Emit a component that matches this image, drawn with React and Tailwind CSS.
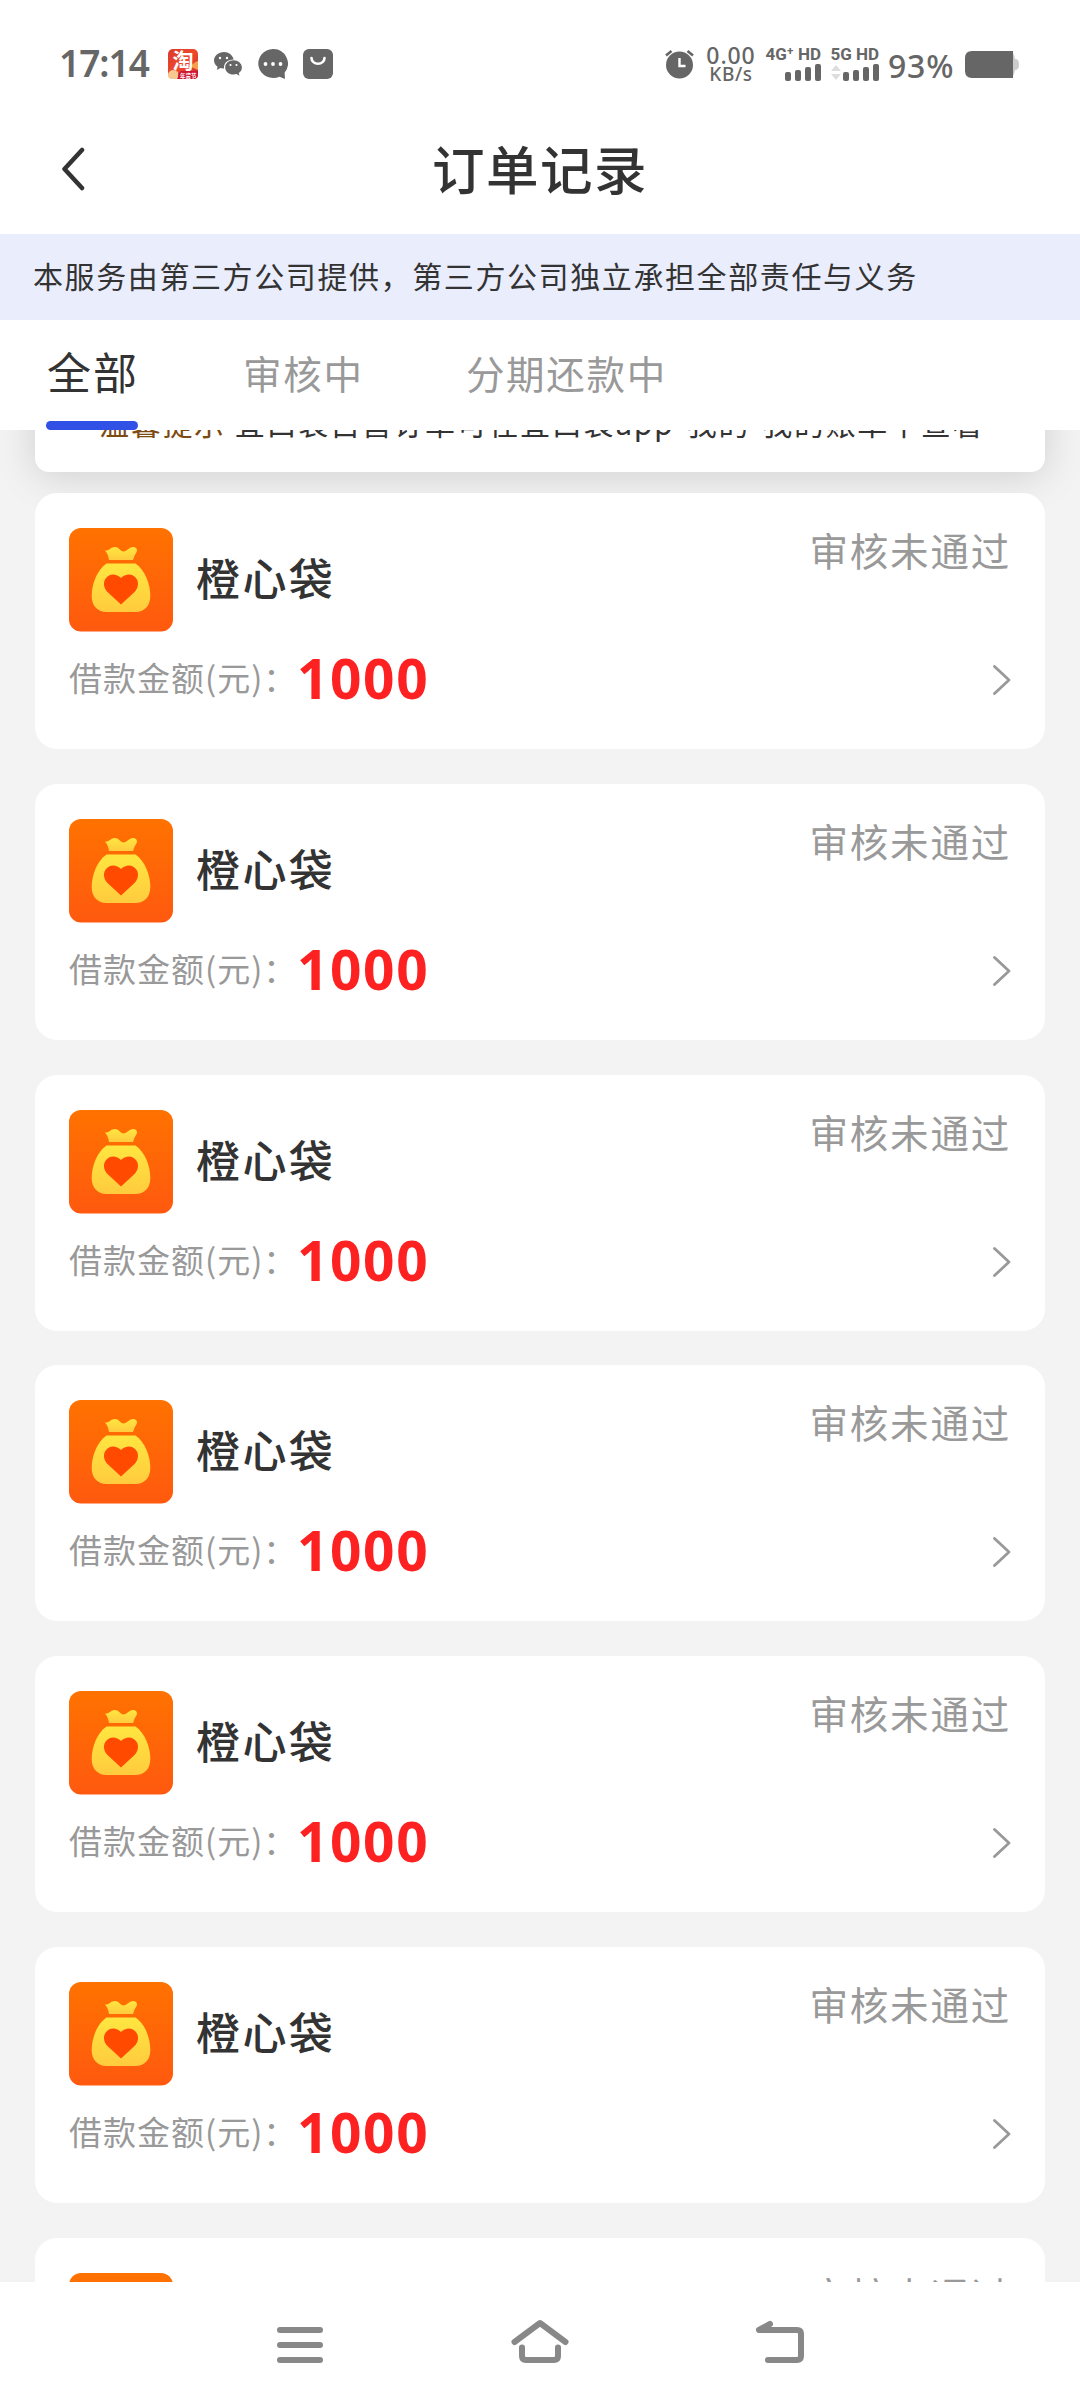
const orders = Array.from({ length: 7 }, (_, id) => ({
  id,
  name: "橙心袋",
  status: "审核未通过",
  amount: "1000",
}));

function TaobaoBadge() {
  return (
    <svg width="30" height="30" viewBox="0 0 30 30" className="shrink-0">
      <defs>
        <linearGradient id="tb" x1="0" y1="0" x2="1" y2="1">
          <stop offset="0" stopColor="#d93a2c" />
          <stop offset="0.5" stopColor="#ee4a2c" />
          <stop offset="1" stopColor="#cf2434" />
        </linearGradient>
      </defs>
      <rect width="30" height="30" rx="5" fill="url(#tb)" />
      <path d="M0 25c2-5 6-5 10-2v7H4a4 4 0 0 1-4-4z" fill="#f7c890" />
      <path d="M30 12c-4 1-5 4-9 5l9 4z" fill="#f6a04c" />
      <path d="M13 22h17v4a4 4 0 0 1-4 4H9c2-2 1-7 4-8z" fill="#cc1836" />
      <text x="4.500" y="18.500" fontSize="21" fontWeight="700" fill="#fff" fontFamily="Noto Sans CJK SC, sans-serif">淘</text>
      <text x="12" y="28.500" fontSize="5.500" fontWeight="700" fill="#fff" fontFamily="Noto Sans CJK SC, sans-serif">年货节</text>
    </svg>
  );
}

function WechatGlyph() {
  return (
    <svg width="28" height="24" viewBox="0 0 28 24" className="ml-4 shrink-0">
      <path d="M10 0C4.500 0 0 3.800 0 8.500c0 2.600 1.400 4.800 3.600 6.300L2.800 18l3.700-1.900c1.100.3 2.300.5 3.500.4C9.400 11 13.500 7.600 19.600 7.400 18.700 3.100 14.600 0 10 0z" fill="#666" />
      <path d="M19.500 8.300c-4.700 0-8.300 3.200-8.300 7.100s3.600 7.100 8.300 7.100c1 0 2-.2 2.900-.4l3.100 1.700-.8-2.800c1.900-1.300 3.200-3.300 3.200-5.600 0-3.900-3.800-7.100-8.400-7.100z" fill="#666" />
      <g fill="#fff">
        <circle cx="6" cy="6" r="1.200" />
        <circle cx="13" cy="6" r="1.200" />
        <circle cx="16.500" cy="13" r="1.100" />
        <circle cx="22.500" cy="13" r="1.100" />
      </g>
    </svg>
  );
}

function ChatGlyph() {
  return (
    <svg width="30" height="30" viewBox="0 0 30 30" className="ml-4 shrink-0">
      <path d="M15 0a15 14.500 0 1 0 6.500 27.700L27 30l-.4-6.200A14.600 14.600 0 0 0 15 0z" fill="#666" />
      <g fill="#fff">
        <circle cx="7.500" cy="15" r="1.900" />
        <circle cx="15" cy="15" r="1.900" />
        <circle cx="22.500" cy="15" r="1.900" />
      </g>
    </svg>
  );
}

function BagGlyph() {
  return (
    <svg width="30" height="30" viewBox="0 0 30 30" className="ml-[15px] shrink-0">
      <rect width="30" height="30" rx="6" fill="#666" />
      <path d="M8.500 9a6.500 5.800 0 0 0 13 0" fill="none" stroke="#fff" strokeWidth="2.600" strokeLinecap="round" />
    </svg>
  );
}

function AlarmGlyph() {
  return (
    <svg width="29" height="29" viewBox="0 0 29 29" className="shrink-0">
      <circle cx="14.500" cy="15" r="13.500" fill="#666" />
      <path d="M1 5.500 6.500 1M28 5.500 22.500 1" stroke="#666" strokeWidth="2.600" />
      <path d="M14.500 8v8h6" fill="none" stroke="#fff" strokeWidth="2.400" />
    </svg>
  );
}

function Bars() {
  return (
    <div className="flex items-end gap-[4px]">
      <i className="block h-[9px] w-[6px] rounded-[2px] bg-[#666]" />
      <i className="block h-[11px] w-[6px] rounded-[2px] bg-[#666]" />
      <i className="block h-[14px] w-[6px] rounded-[2px] bg-[#666]" />
      <i className="block h-[17px] w-[6px] rounded-[2px] bg-[#666]" />
    </div>
  );
}

function StatusBar() {
  return (
    <div className="flex h-[100px] shrink-0 justify-between pl-[59px] pr-[61px] pt-[28px] text-[#666]">
      <div className="flex h-[72px] items-center">
        <span className="-mt-[3px] w-[109px] font-['Noto_Sans'] text-[37px] font-semibold leading-none tracking-[-1px]">17:14</span>
        <TaobaoBadge />
        <WechatGlyph />
        <ChatGlyph />
        <BagGlyph />
      </div>
      <div className="flex h-[72px] items-center">
        <AlarmGlyph />
        <div className="ml-[11px] flex w-[52px] flex-col items-center font-['Noto_Sans'] font-medium">
          <span className="text-[23px] leading-[19px] tracking-[0.900px]">0.00</span>
          <span className="text-[19px] leading-[18px] tracking-[0.600px]">KB/s</span>
        </div>
        <div className="ml-[7px] flex h-[34px] w-[58px] flex-col items-end justify-between pr-px">
          <span className="whitespace-nowrap font-['Roboto'] text-[17px] font-bold leading-[14px]">4G⁺ HD</span>
          <Bars />
        </div>
        <div className="ml-[7px] flex h-[34px] w-[50px] flex-col items-end justify-between">
          <span className="whitespace-nowrap font-['Roboto'] text-[17px] font-bold leading-[14px]">5G HD</span>
          <div className="flex items-end gap-[2px]">
            <svg width="10" height="16" viewBox="0 0 10 16">
              <path d="M5 0l5 6H0zM5 15l5-6H0z" fill="#ddd" />
            </svg>
            <Bars />
          </div>
        </div>
        <span className="ml-[9px] mt-[3px] w-[68px] whitespace-nowrap font-['Noto_Sans'] text-[32px] font-medium leading-none tracking-[0.800px]">93%</span>
        <svg width="54" height="27" viewBox="0 0 54 27" className="ml-[9px]">
          <path d="M44 0q5 0 6 8 4 0 4 5.500T50 19q-1 8-6 8z" fill="#ccc" />
          <path d="M7 0h41v27H7q-7 0-7-7V7q0-7 7-7z" fill="#666" />
        </svg>
      </div>
    </div>
  );
}

function Pouch() {
  return (
    <svg width="104" height="104" viewBox="0 0 104 104" className="shrink-0">
      <defs>
        <linearGradient id="bg" x1="0" y1="0" x2="0" y2="1">
          <stop offset="0" stopColor="#ff7200" />
          <stop offset="1" stopColor="#ff590f" />
        </linearGradient>
        <linearGradient id="bag" x1="0" y1="0" x2="0" y2="1">
          <stop offset="0" stopColor="#ffe640" />
          <stop offset="1" stopColor="#ffcb3e" />
        </linearGradient>
      </defs>
      <rect width="104" height="103.500" rx="12" fill="url(#bg)" />
      <path d="M36 22.500c4 .5 6-3.500 10-3.500 4.500 0 5 4.500 8.500 4.500S60 19 64 19c4.500 0 5 4 2.500 7-1.500 2-1.500 4-2.500 6H40c-.5-3.500-1.500-6.500-4-9.500z" fill="url(#bag)" />
      <path d="M37.500 35.500h29C76 42 81.300 56 81.300 68c0 10-6 16-15 16H37.700c-9 0-15-6-15-16 0-12 5.300-26 14.800-32.500z" fill="url(#bag)" />
      <path d="M52 76.500 38.500 64c-4.500-4.500-4.500-11-1-14.500 4-4.500 10.500-3.500 14.500.5 4-4 10.500-5 14.500-.5 3.500 3.500 3.500 10-1 14.500z" fill="#ff4a00" />
    </svg>
  );
}

function OrderCard({ order }) {
  return (
    <div className="h-[256px] shrink-0 rounded-[22px] bg-white pl-[34px] pr-[34px] pt-[35px]">
      <div className="flex h-[104px]">
        <Pouch />
        <span className="ml-[23px] mt-[17px] text-[44px] font-medium leading-[64px] tracking-[2.400px] text-[#333]">{order.name}</span>
        <span className="-mt-[3px] ml-auto text-[38.500px] leading-[48px] tracking-[1.800px] text-[#999]">{order.status}</span>
      </div>
      <div className="mt-[20px] flex h-[56px] items-center">
        <span className="-mt-[6px] w-[228px] whitespace-nowrap text-[33px] leading-[48px] tracking-[1px] text-[#999]">借款金额(元)：</span>
        <span className="-mt-[4px] font-['Open_Sans'] text-[55px] font-bold leading-[56px] tracking-[1.600px] text-[#fe2122]">{order.amount}</span>
        <svg width="18" height="30" viewBox="0 0 18 30" className="ml-auto">
          <path d="M1.500 1.500 16 15 1.500 28.500" fill="none" stroke="#999" strokeWidth="2.800" strokeLinecap="round" strokeLinejoin="round" />
        </svg>
      </div>
    </div>
  );
}

export default function App() {
  return (
    <div className="flex h-[2408px] w-[1080px] flex-col overflow-hidden bg-white font-['Noto_Sans_CJK_SC',sans-serif]">
      <StatusBar />
      <header className="grid h-[134px] shrink-0 grid-cols-[1fr_auto_1fr] items-center">
        <svg width="24" height="44" viewBox="0 0 24 44" className="ml-[61px] mt-[4px]">
          <path d="M21 3 3.500 22 21 41" fill="none" stroke="#333" strokeWidth="4.500" strokeLinecap="round" strokeLinejoin="round" />
        </svg>
        <h1 className="text-[52.500px] font-medium leading-[70px] tracking-[1.500px] text-[#333]">订单记录</h1>
        <span />
      </header>
      <div className="flex h-[86px] shrink-0 items-center bg-[#eaedfc] pb-[3px] pl-[33px] text-[30px] tracking-[1.600px] text-[#333]">
        本服务由第三方公司提供，第三方公司独立承担全部责任与义务
      </div>
      <nav className="flex h-[110px] shrink-0 pl-[46px]">
        <div className="flex w-[92px] flex-col whitespace-nowrap text-[44px] leading-[101px] tracking-[2px] text-[#333]">
          <span className="mt-px h-[100px] pl-px">全部</span>
          <i className="block h-[9px] rounded-full bg-[#3050e6]" />
        </div>
        <span className="ml-[105px] text-[38.500px] leading-[105px] tracking-[1.800px] text-[#999]">审核中</span>
        <span className="ml-[102px] text-[38.500px] leading-[105px] tracking-[1.700px] text-[#999]">分期还款中</span>
      </nav>
      <main className="flex h-[1852px] shrink-0 flex-col overflow-hidden bg-[#f3f3f3] px-[35px]">
        <div className="-mt-[108px] flex h-[150px] shrink-0 items-end rounded-[14px] bg-white pb-[30px] pl-[64px] text-[30px] leading-[40px] tracking-[1.700px] text-[#333] shadow-[0_4px_40px_rgba(0,0,0,0.15)]">
          <span className="mr-[9px] text-[#7d4a12]">温馨提示</span>
          <span>宜口袋自营订单可在宜口袋app-我的-我的账单中查看</span>
        </div>
        <div className="mt-[21px] flex shrink-0 flex-col gap-[34.830px]">
          {orders.map((order) => (
            <OrderCard key={order.id} order={order} />
          ))}
        </div>
      </main>
      <footer className="flex h-[126px] shrink-0 justify-center gap-[182px] bg-white pt-[35px]">
        <svg width="58" height="50" viewBox="271 2317 58 50" fill="none" stroke="#888" strokeWidth="6" strokeLinecap="round">
          <path d="M280 2330h40M280 2345h40M280 2360h40" />
        </svg>
        <svg width="58" height="50" viewBox="511 2317 58 50" fill="none" stroke="#888" strokeWidth="6" strokeLinecap="round" strokeLinejoin="round">
          <path d="M514.500 2342 540 2323 565.500 2342M522 2347.500v8.500q0 4 4 4h28q4 0 4-4v-8.500" />
        </svg>
        <svg width="58" height="50" viewBox="751 2317 58 50" fill="none" stroke="#888" strokeWidth="6" strokeLinecap="round" strokeLinejoin="round">
          <path d="M770 2324 759 2330h38q4 0 4 4v22q0 4-4 4h-29" />
        </svg>
      </footer>
    </div>
  );
}
